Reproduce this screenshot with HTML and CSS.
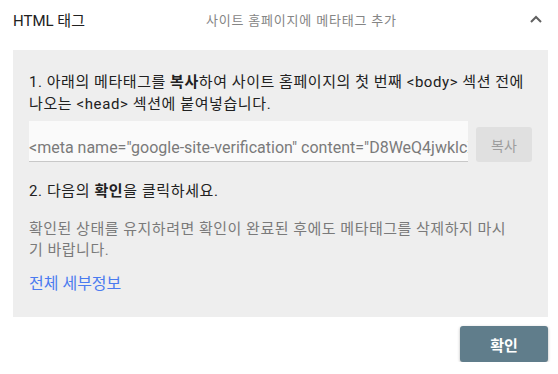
FILE: index.html
```html
<!DOCTYPE html>
<html lang="ko">
<head>
<meta charset="utf-8">
<link rel="stylesheet" href="styles.css">
</head>
<body>
<div class="page">
  <div class="header">
    <div class="title">HTML 태그</div>
    <div class="subtitle">사이트 홈페이지에 메타태그 추가</div>
    <svg class="chevron" width="12" height="8" viewBox="0 0 12 8"><path d="M1 7 L6 2 L11 7" fill="none" stroke="#616161" stroke-width="2"/></svg>
  </div>
  <div class="panel">
    <p class="step"><span class="wide-1">1. 아래의 메타태그를 <b>복사</b>하여 사이트 홈페이지의 첫 번째 &lt;body&gt; 섹션 전에</span><br><span class="wide">나오는 &lt;head&gt; 섹션에 붙여넣습니다.</span></p>
    <div class="copy-row">
      <div class="code-field"><span class="code">&lt;meta name="google-site-verification" content="D8WeQ4jwklcXpRt0aZ9mBvUqL3sN7yKe2HfGdTj5oW8" /&gt;</span></div>
      <div class="copy-btn">복사</div>
    </div>
    <p class="step step2"><span class="wide">2. 다음의 <b>확인</b>을 클릭하세요.</span></p>
    <p class="note">확인된 상태를 유지하려면 확인이 완료된 후에도 메타태그를 삭제하지 마시<br>기 바랍니다.</p>
    <a class="details" href="#">전체 세부정보</a>
  </div>
  <div class="actions">
    <div class="confirm-btn">확인</div>
  </div>
</div>
</body>
</html>
```
FILE: styles.css
```css
html, body {
  margin: 0;
  padding: 0;
  background: #ffffff;
}
body {
  font-family: Roboto, "Noto Sans CJK KR", sans-serif;
  color: #212121;
  width: 558px;
}
.page {
  width: 558px;
}
.header {
  height: 38px;
  display: flex;
  align-items: center;
  padding: 0 16px 0 13px;
}
.title {
  width: 193px;
  font-size: 15px;
  color: #212121;
}
.subtitle {
  font-size: 13px;
  letter-spacing: 0.8px;
  color: #858585;
}
.chevron {
  margin-left: auto;
}
.panel {
  margin: 12px 10px 0 13px;
  background: #eeeeee;
  padding: 21px 16px 22px 16px;
}
.step {
  margin: 0;
  font-size: 15px;
  line-height: 22px;
  color: #212121;
  white-space: nowrap;
}
.step .wide {
  letter-spacing: 0.6px;
}
.step .wide-1 {
  letter-spacing: 0.55px;
}
.step b {
  font-weight: 700;
}
.copy-row {
  display: flex;
  align-items: flex-end;
  gap: 8px;
  margin-top: 6px;
}
.code-field {
  width: 439px;
  background: #fafafa;
  border-bottom: 1px solid #c8c8c8;
  overflow: hidden;
  white-space: nowrap;
  display: flex;
  align-items: flex-end;
  padding-bottom: 3px;
  height: 37px;
}
.code {
  font-family: Roboto, sans-serif;
  font-size: 16px;
  line-height: 20px;
  color: #7a7a7a;
}
.copy-btn {
  width: 56px;
  height: 35px;
  background: #e0e0e0;
  border-radius: 3px;
  color: #9e9e9e;
  font-size: 14px;
  display: flex;
  align-items: center;
  justify-content: center;
}
.step2 {
  margin-top: 18px;
}
.note {
  margin: 17px 0 0 0;
  font-size: 15px;
  line-height: 21px;
  letter-spacing: 0.5px;
  white-space: nowrap;
  color: #7a7a7a;
}
.details {
  display: block;
  margin-top: 12px;
  font-size: 16px;
  line-height: 22px;
  color: #4a7bf0;
  text-decoration: none;
}
.actions {
  display: flex;
  justify-content: flex-end;
  padding: 9px 10px 0 0;
}
.confirm-btn {
  width: 88px;
  height: 36px;
  background: #607d8b;
  color: #ffffff;
  border-radius: 3px;
  box-shadow: 0 1px 3px rgba(0,0,0,0.3);
  font-size: 15px;
  font-weight: 700;
  display: flex;
  align-items: center;
  justify-content: center;
}
```
